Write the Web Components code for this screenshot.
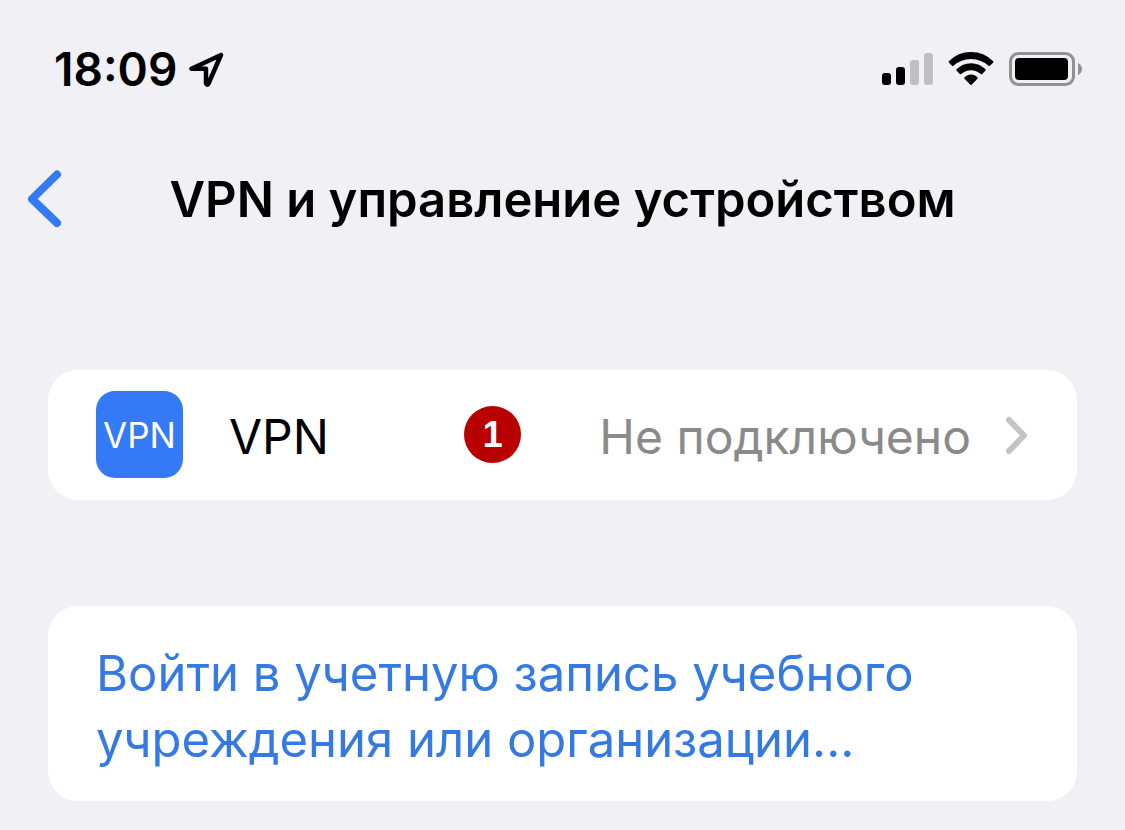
<!DOCTYPE html>
<html lang="ru">
<head>
<meta charset="utf-8">
<meta name="viewport" content="width=device-width, initial-scale=1">
<title>VPN и управление устройством</title>
<style>
body { margin: 0; background: #f1f0f5; color: #000; font-family: Inter, "Liberation Sans", sans-serif; }
</style>
</head>
<body>
<settings-page>
  <status-bar slot="status" time="18:09"></status-bar>
  <nav-header slot="header">VPN и управление устройством</nav-header>
  <list-card>
    <vpn-row value="Не подключено" step="1">VPN</vpn-row>
  </list-card>
  <list-card>
    <action-row>Войти в учетную запись учебного учреждения или организации...</action-row>
  </list-card>
</settings-page>
<script>
const define = (name, html, setup) => {
  const template = document.createElement('template');
  template.innerHTML = html;
  customElements.define(name, class extends HTMLElement {
    constructor() {
      super();
      this.attachShadow({ mode: 'open' }).append(template.content.cloneNode(true));
    }
    connectedCallback() { if (setup) setup(this, this.shadowRoot); }
  });
};

define('settings-page', `
<style>
  :host { display: block; }
  main { display: flex; flex-direction: column; gap: 106px; padding: 132px 48px 28px; }
</style>
<slot name="status"></slot>
<slot name="header"></slot>
<main><slot></slot></main>`);

define('status-bar', `
<style>
  :host { display: flex; align-items: center; justify-content: space-between; height: 56px; padding: 41px 42px 0 54px; }
  .left, .right { display: flex; align-items: center; }
  .left { gap: 12px; }
  .right { gap: 15px; }
  time { font-size: 46px; line-height: 56px; font-weight: 600; }
  svg { display: block; }
</style>
<div class="left">
  <time></time>
  <svg width="36" height="36" viewBox="0 0 36 36" fill="none" stroke="#000" stroke-width="4.500" stroke-linejoin="round" aria-hidden="true"><path d="M32 4 2.500 17.800H17V32.500Q18 35 19.500 32.500Z"/></svg>
</div>
<div class="right">
  <svg width="51" height="34" viewBox="0 0 51 34" aria-hidden="true">
    <rect x="0" y="21" width="9" height="12" rx="3"/><rect x="14" y="15" width="9" height="18" rx="3"/>
    <g fill="#bfbec3"><rect x="28" y="8" width="9" height="25" rx="3"/><rect x="42" y="1" width="9" height="32" rx="3"/></g>
  </svg>
  <svg width="46" height="34" viewBox="0 0 46 34" aria-hidden="true">
    <path d="M0.8 9.300Q10 0 23 0T45.200 9.300Q45.700 10 45.200 10.600L42 13.800Q41.300 14.400 40.600 13.800Q33 7 23 7T5.400 13.800Q4.700 14.400 4 13.800L.8 10.600Q.3 10 .8 9.300Z"/>
    <path d="M8.500 17.300Q14.500 11.300 23 11.300T37.500 17.300Q38 18 37.500 18.600L34.200 22Q33.500 22.500 32.800 22Q28.500 18.200 23 18.200T13.200 22Q12.500 22.500 11.800 22L8.500 18.600Q8 18 8.500 17.300Z"/>
    <path d="M16.500 25.500Q19 22.500 23 22.500T29.500 25.500Q30 26.200 29.500 26.800L23.600 32.700Q23 33.200 22.400 32.700L16.500 26.800Q16 26.200 16.500 25.500Z"/>
  </svg>
  <svg width="74" height="34" viewBox="0 0 74 34" aria-hidden="true">
    <rect x="1.500" y="1.500" width="63" height="31" rx="8" fill="none" stroke="#929196" stroke-width="3"/>
    <rect x="6" y="6" width="53" height="22" rx="4"/>
    <path d="M69 11Q73 13 73 17T69 23Z" fill="#929196"/>
  </svg>
</div>`, (el, root) => { root.querySelector('time').textContent = el.getAttribute('time'); });

define('nav-header', `
<style>
  :host { display: grid; grid-template-columns: 80px 1fr 80px; align-items: center; padding: 61px 0 0; height: 80px; }
  button { border: 0; background: none; padding: 0 0 0 26px; height: 80px; cursor: pointer; }
  svg { display: block; }
  h1 { margin: 0; padding-top: 2px; font-size: 49px; line-height: 80px; font-weight: 600; text-align: center; white-space: nowrap; }
</style>
<button type="button" aria-label="Назад"><svg width="38" height="60" viewBox="0 0 38 60" fill="none" stroke="#3479f6" stroke-width="8" stroke-linecap="round" stroke-linejoin="round"><path d="M31 5.500 6 30 31 54"/></svg></button>
<h1><slot></slot></h1>`);

define('list-card', `
<style>
  :host { display: block; background: #fff; border-radius: 30px; overflow: hidden; }
</style>
<slot></slot>`);

define('vpn-row', `
<style>
  :host { display: block; }
  a { display: flex; align-items: center; height: 129px; padding: 0 48px 1px; color: #000; text-decoration: none; font-size: 48px; line-height: 64px; }
  .icon { display: grid; place-items: center; width: 87px; height: 87px; border-radius: 19px; background: #3479f6; color: #fff; font-size: 35px; line-height: 44px; margin-right: 46px; }
  .step { display: grid; place-items: center; width: 57px; height: 57px; border-radius: 50%; background: #b80000; color: #fff; font: bold 36px/56px "Liberation Sans", sans-serif; margin: 0 78px 0 auto; }
  .label, .value { padding-top: 4px; white-space: nowrap; }
  .value { color: #8a8a8a; }
  svg { display: block; margin-left: 34px; }
</style>
<a href="#vpn">
  <span class="icon" aria-hidden="true">VPN</span>
  <span class="label"><slot></slot></span>
  <span class="step"></span>
  <span class="value"></span>
  <svg width="24" height="38" viewBox="0 0 24 38" fill="none" stroke="#c4c4c4" stroke-width="6" stroke-linecap="round" stroke-linejoin="round" aria-hidden="true"><path d="M4 4 19 19.500 4 35"/></svg>
</a>`, (el, root) => {
  root.querySelector('.step').textContent = el.getAttribute('step');
  root.querySelector('.value').textContent = el.getAttribute('value');
});

define('action-row', `
<style>
  :host { display: block; }
  a { display: block; padding: 35px 48px 28px; color: #3479e4; text-decoration: none; font-size: 49px; line-height: 66px; }
</style>
<a href="#account"><slot></slot></a>`);
</script>
</body>
</html>
